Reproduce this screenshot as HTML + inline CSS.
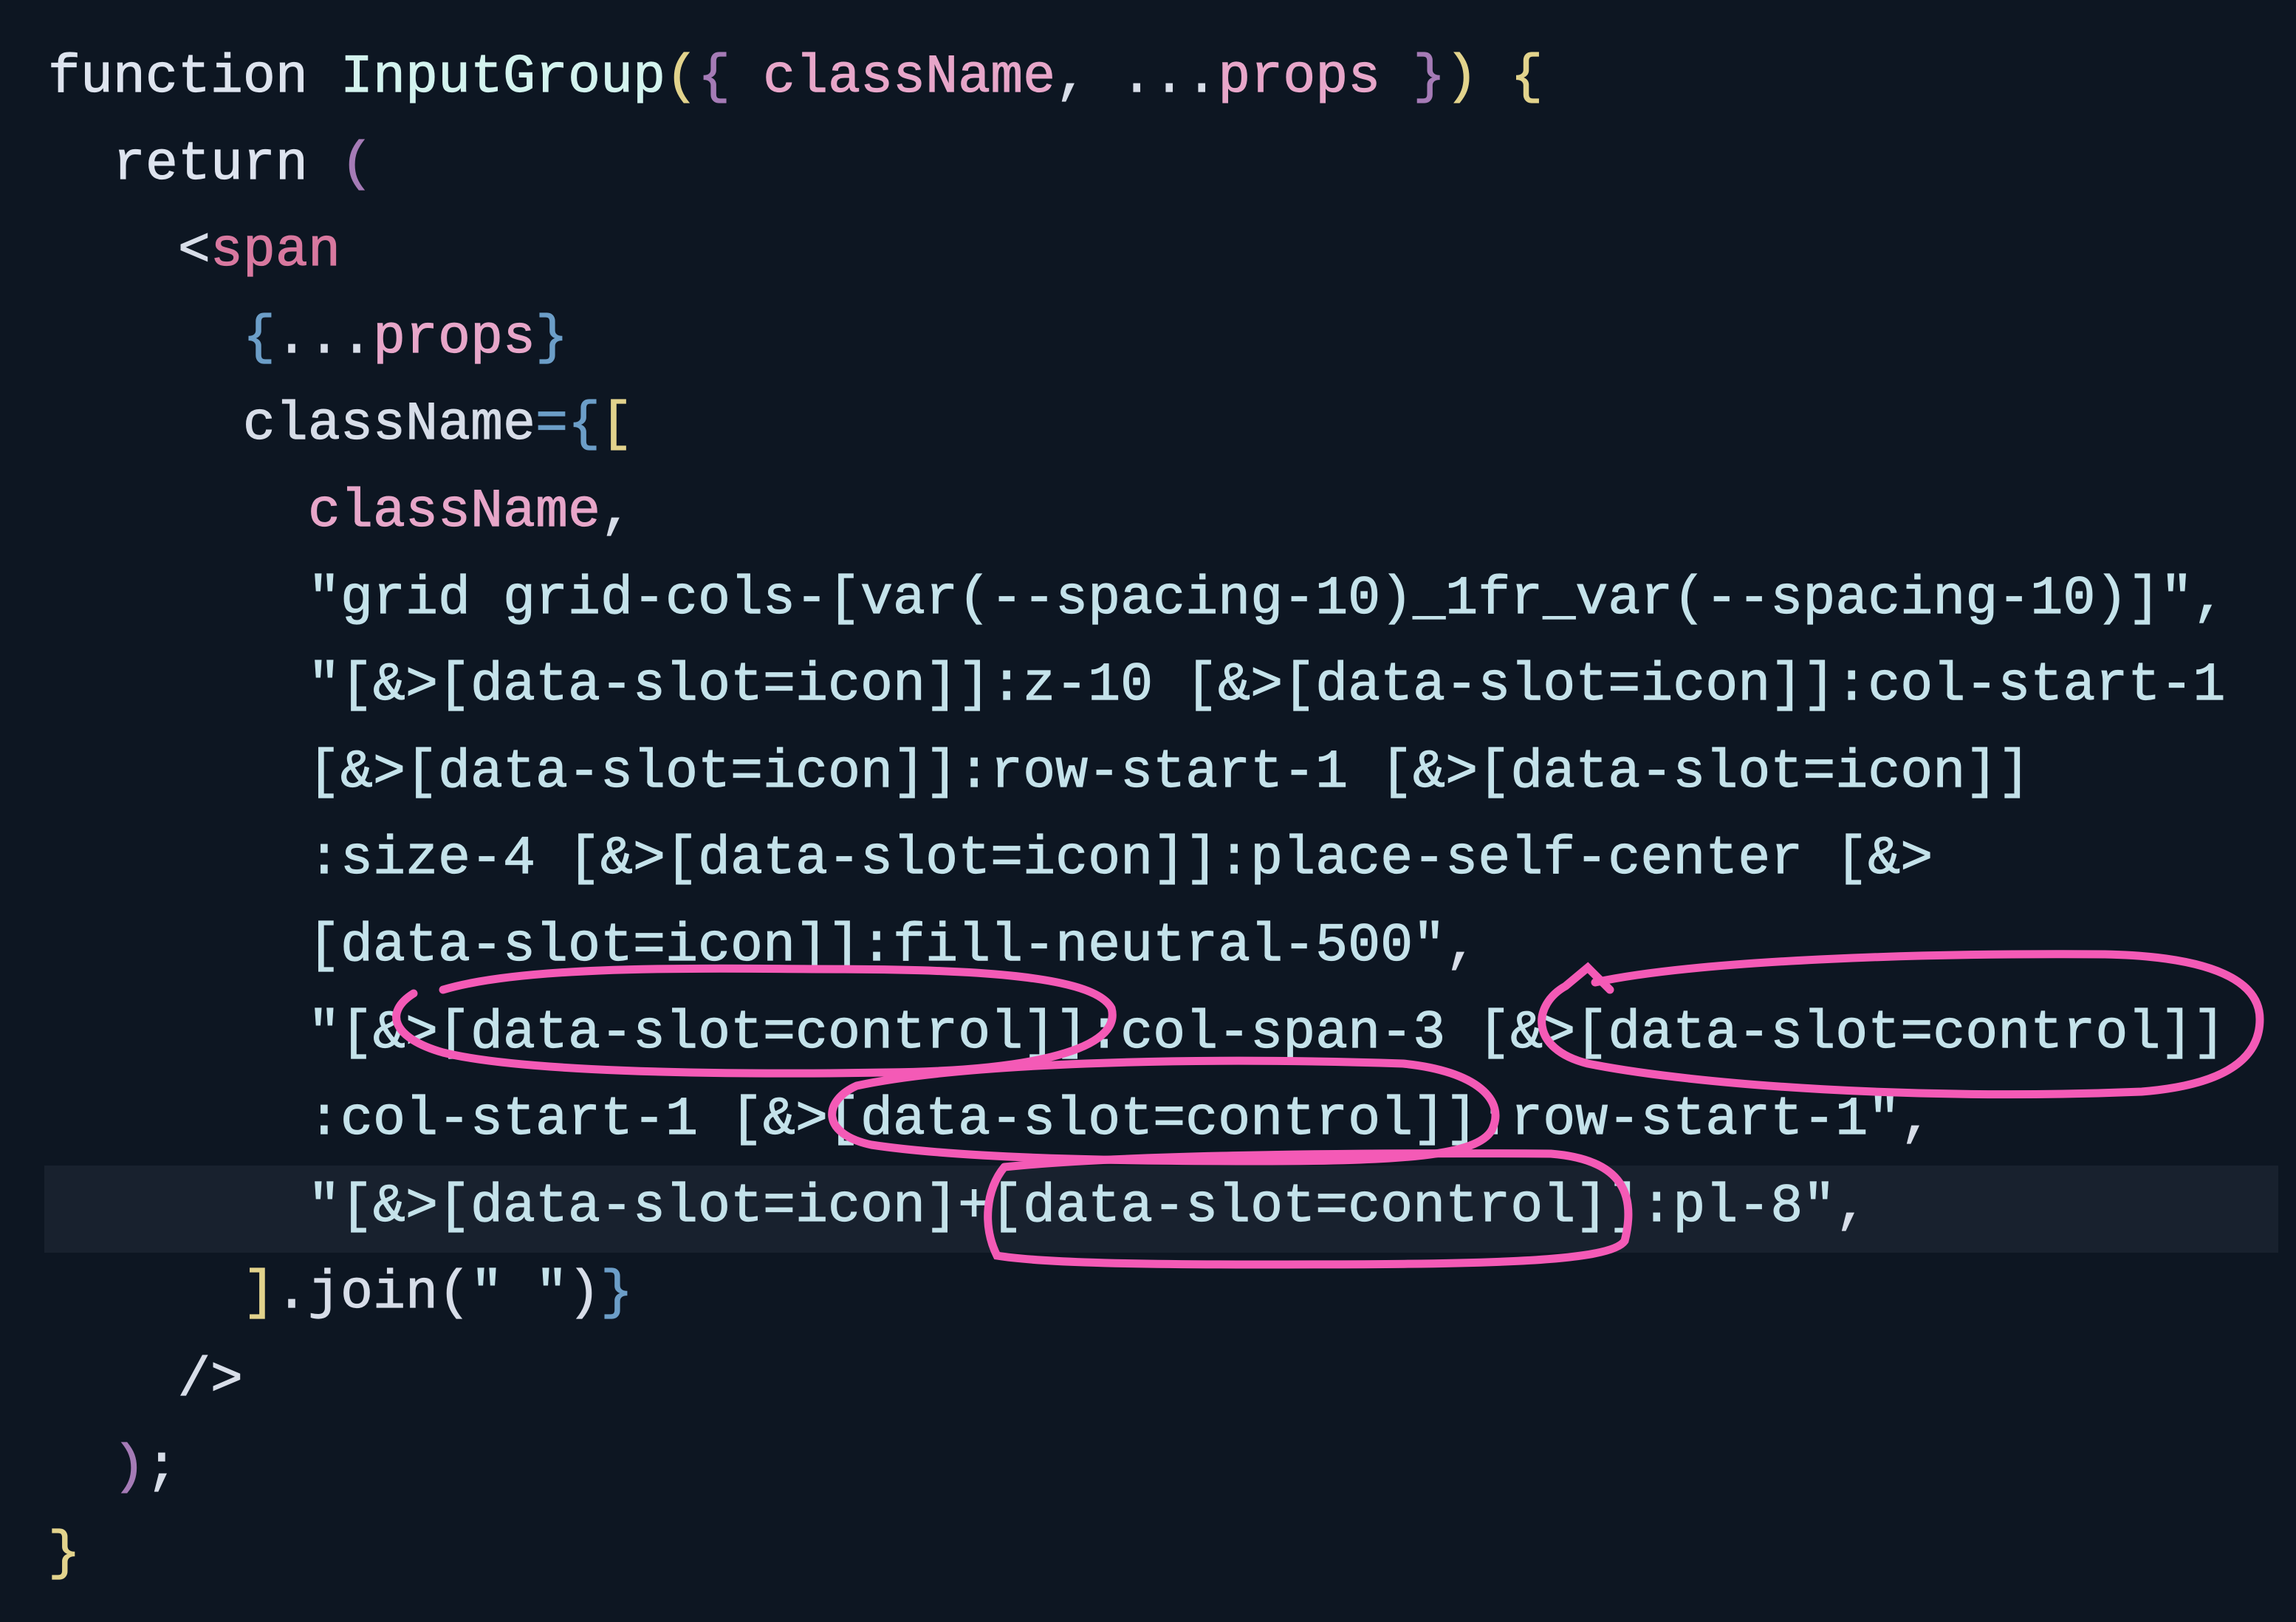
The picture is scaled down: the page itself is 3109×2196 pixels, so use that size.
<!DOCTYPE html>
<html><head><meta charset="utf-8"><style>
html,body{margin:0;padding:0;width:3109px;height:2196px;background:#0d1622;overflow:hidden}
.hl{position:absolute;left:60px;top:1578px;width:3025px;height:118px;background:#18212e}
pre{position:absolute;left:65px;top:46px;margin:0;font-family:"Liberation Mono",monospace;font-size:73px;line-height:117.6px;color:#c4e2ea;letter-spacing:0.2px;-webkit-text-stroke:1.2px currentColor}
.k{color:#dde3ee}.f{color:#d3f3ee}.y{color:#e2d38c}.p{color:#a57bb6}.n{color:#e7a6c9}.t{color:#d8789f}.b{color:#6c9ec8}.w{color:#d7dde8}
svg{position:absolute;left:0;top:0}
</style></head><body>
<div class="hl"></div>
<pre><span class="k">function</span> <span class="f">InputGroup</span><span class="y">(</span><span class="p">{</span> <span class="n">className</span><span class="w">,</span> <span class="w">...</span><span class="n">props</span> <span class="p">}</span><span class="y">)</span> <span class="y">{</span>
  <span class="k">return</span> <span class="p">(</span>
    <span class="w">&lt;</span><span class="t">span</span>
      <span class="b">{</span><span class="w">...</span><span class="n">props</span><span class="b">}</span>
      <span class="w">className</span><span class="b">=</span><span class="b">{</span><span class="y">[</span>
        <span class="n">className</span><span class="w">,</span>
        "grid grid-cols-[var(--spacing-10)_1fr_var(--spacing-10)]",
        "[&amp;&gt;[data-slot=icon]]:z-10 [&amp;&gt;[data-slot=icon]]:col-start-1
        [&amp;&gt;[data-slot=icon]]:row-start-1 [&amp;&gt;[data-slot=icon]]
        :size-4 [&amp;&gt;[data-slot=icon]]:place-self-center [&amp;&gt;
        [data-slot=icon]]:fill-neutral-500"<span class="w">,</span>
        "[&amp;&gt;[data-slot=control]]:col-span-3 [&amp;&gt;[data-slot=control]]
        :col-start-1 [&amp;&gt;[data-slot=control]]:row-start-1"<span class="w">,</span>
        "[&amp;&gt;[data-slot=icon]+[data-slot=control]]:pl-8"<span class="w">,</span>
      <span class="y">]</span><span class="w">.join(</span>" "<span class="w">)</span><span class="b">}</span>
    <span class="w">/&gt;</span>
  <span class="p">)</span><span class="w">;</span>
<span class="y">}</span></pre>
<svg width="3109" height="2196" fill="none" stroke="#f45ab6" stroke-width="11" stroke-linecap="round">
<path d="M600 1340 C700 1310 900 1310 1100 1312 C1300 1312 1480 1318 1505 1365 C1520 1420 1400 1450 1200 1452 C950 1456 700 1450 600 1425 C530 1405 520 1370 560 1345"/>
<path d="M2160 1330 C2300 1300 2600 1290 2850 1292 C3000 1295 3060 1330 3060 1380 C3060 1440 3000 1470 2900 1478 C2600 1490 2300 1470 2150 1440 C2070 1420 2075 1360 2120 1335 L2150 1310 L2180 1340"/>
<path d="M1160 1470 C1300 1440 1600 1430 1900 1440 C2000 1450 2040 1490 2020 1530 C2000 1565 1900 1572 1700 1572 C1500 1572 1300 1568 1180 1550 C1110 1535 1115 1490 1160 1470"/>
<path d="M1360 1580 C1500 1565 1800 1560 2100 1562 C2200 1570 2215 1620 2200 1680 C2180 1710 2000 1712 1700 1712 C1500 1712 1400 1708 1350 1700 C1330 1660 1335 1610 1360 1580"/>
</svg>
</body></html>
